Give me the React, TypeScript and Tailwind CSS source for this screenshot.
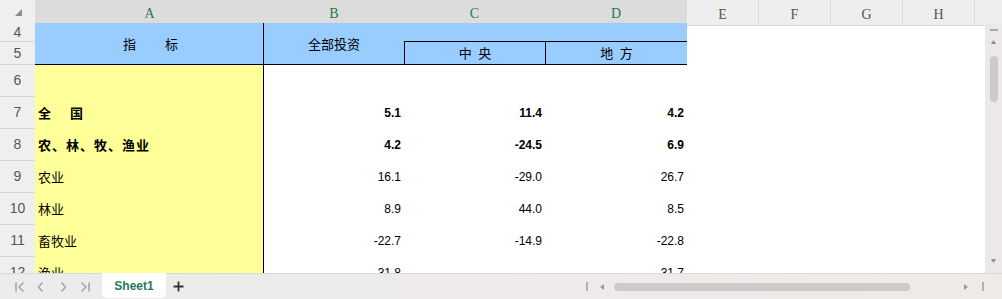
import React from "react";

const cjk = { fontFamily: '"Noto Sans CJK SC", "Noto Sans", sans-serif' };
const num = { fontFamily: '"Liberation Sans", Arial, sans-serif' };

type Row = { n: number; a: string; b: string; c: string; d: string; bold?: boolean };

const rows: Row[] = [
  { n: 6, a: "", b: "", c: "", d: "" },
  { n: 7, a: "全\u3000 国", b: "5.1", c: "11.4", d: "4.2", bold: true },
  { n: 8, a: "农、林、牧、渔业", b: "4.2", c: "-24.5", d: "6.9", bold: true },
  { n: 9, a: "农业", b: "16.1", c: "-29.0", d: "26.7" },
  { n: 10, a: "林业", b: "8.9", c: "44.0", d: "8.5" },
  { n: 11, a: "畜牧业", b: "-22.7", c: "-14.9", d: "-22.8" },
  { n: 12, a: "渔业", b: "31.8", c: "", d: "31.7" },
];

const rowStart = [
  "row-start-3",
  "row-start-4",
  "row-start-5",
  "row-start-6",
  "row-start-7",
  "row-start-8",
  "row-start-9",
];

function RowHdr({ label, cls }: { label: string; cls: string }) {
  return (
    <div
      className={`col-start-1 ${cls} flex items-center justify-center bg-[#efefef] border-b border-[#d6d6d6] text-[14px] text-[#555]`}
      style={num}
    >
      {label}
    </div>
  );
}

function Arrow({ d, w = 10, h = 10 }: { d: string; w?: number; h?: number }) {
  return (
    <svg width={w} height={h} viewBox={`0 0 ${w} ${h}`} fill="none" stroke="#a6a6a6" strokeWidth="1.6" strokeLinecap="round" strokeLinejoin="round">
      <path d={d} />
    </svg>
  );
}

export default function App() {
  const colHdr = "flex items-center justify-center pt-[3px] text-[14px]";
  return (
    <div className="w-[1002px] h-[299px] flex flex-col overflow-hidden bg-white select-none">
      {/* column header row */}
      <div
        className="grid h-[23px] shrink-0 grid-cols-[35px_229px_140px_141px_142px_72px_72px_72px_72px_1fr]"
        style={{ fontFamily: '"Liberation Serif", serif' }}
      >
        <div className="bg-[#efefef] flex items-start justify-start pl-[15px] pt-[9px]">
          <svg width="7" height="7" viewBox="0 0 7 7">
            <polygon points="7,0 7,7 0,7" fill="#8c8c8c" />
          </svg>
        </div>
        {["A", "B", "C", "D"].map((l) => (
          <div key={l} className={`${colHdr} bg-[#dcdcdc] border-b-2 border-[#3f9132] text-[#1f7a4d]`}>
            {l}
          </div>
        ))}
        {["E", "F", "G", "H"].map((l) => (
          <div key={l} className={`${colHdr} bg-[#eeeeee] border-r border-b border-[#d9d9d9] text-[#555]`}>
            {l}
          </div>
        ))}
        <div className="bg-[#eeeeee] border-b border-[#d9d9d9]" />
      </div>

      {/* body */}
      <div className="flex h-[250px] shrink-0 overflow-hidden">
        <div className="w-[985px] h-[250px] overflow-hidden">
          <div className="grid grid-cols-[35px_229px_140px_141px_142px_72px_72px_72px_72px_1fr] grid-rows-[19px_23px_repeat(7,32px)] text-black">
            <RowHdr label="4" cls="row-start-1" />
            <RowHdr label="5" cls="row-start-2" />
            <div
              className="col-start-2 row-start-1 row-span-2 bg-[#99ccff] border-r border-b border-black flex items-center justify-center pl-[3px] text-[13px] whitespace-pre"
              style={cjk}
            >
              {"指\u3000 \u3000标"}
            </div>
            <div
              className="col-start-3 row-start-1 row-span-2 bg-[#99ccff] border-b border-black flex items-center justify-center text-[13px]"
              style={cjk}
            >
              全部投资
            </div>
            <div className="col-start-4 row-start-1 bg-[#99ccff] border-b border-black" />
            <div className="col-start-5 row-start-1 bg-[#99ccff] border-b border-black" />
            <div
              className="col-start-4 row-start-2 bg-[#99ccff] border-l border-b border-black flex items-center justify-center text-[13px] whitespace-pre"
              style={cjk}
            >
              {"中\u2002央"}
            </div>
            <div
              className="col-start-5 row-start-2 bg-[#99ccff] border-l border-b border-black flex items-center justify-center text-[13px] whitespace-pre"
              style={cjk}
            >
              {"地\u2002方"}
            </div>

            {rows.map((r, i) => (
              <React.Fragment key={r.n}>
                <RowHdr label={String(r.n)} cls={rowStart[i]} />
                <div
                  className={`col-start-2 ${rowStart[i]} bg-[#ffff99] border-r border-black flex items-center pl-[3px] text-[13px] whitespace-pre ${r.bold ? "font-bold tracking-[1px]" : ""}`}
                  style={cjk}
                >
                  {r.a}
                </div>
                {[r.b, r.c, r.d].map((v, j) => (
                  <div
                    key={j}
                    className={`${j === 0 ? "col-start-3" : j === 1 ? "col-start-4" : "col-start-5"} ${rowStart[i]} flex items-center justify-end pr-[3px] text-[12px] ${r.bold ? "font-bold" : ""}`}
                    style={num}
                  >
                    {v}
                  </div>
                ))}
              </React.Fragment>
            ))}
          </div>
        </div>

        {/* vertical scrollbar */}
        <div className="w-[17px] h-[250px] bg-[#ebe8e7] flex flex-col items-center">
          <div className="mt-[6px] w-[8px] h-[2px] bg-[#a9a9a9]" />
          <div className="mt-[9px]">
            <svg width="5" height="4" viewBox="0 0 5 4">
              <polygon points="2.5,0 5,4 0,4" fill="#8f8f8f" />
            </svg>
          </div>
          <div className="mt-[12px] w-[8px] h-[46px] rounded-full bg-[#cdcbca]" />
          <div className="flex-1" />
          <div className="mb-[10px]">
            <svg width="5" height="4" viewBox="0 0 5 4">
              <polygon points="0,0 5,0 2.5,4" fill="#8f8f8f" />
            </svg>
          </div>
        </div>
      </div>

      {/* bottom bar */}
      <div className="relative flex-1 flex items-center border-t border-[#d9d9d9] bg-gradient-to-r from-[#eaecee] via-[#eeeae9] to-[#efe9e7]">
        <div className="flex items-center pl-[15px]">
          <Arrow d="M1 1 V9 M8 1 L4 5 L8 9" />
          <div className="ml-[12px]">
            <Arrow d="M5 1 L1.5 5 L5 9" w={7} />
          </div>
          <div className="ml-[16px]">
            <Arrow d="M2 1 L5.5 5 L2 9" w={7} />
          </div>
          <div className="ml-[13px]">
            <Arrow d="M2 1 L6 5 L2 9 M9 1 V9" />
          </div>
        </div>
        <div
          className="ml-[12px] -mt-[1px] self-start w-[64px] h-[25px] bg-white rounded-b-[5px] flex items-center justify-center text-[12px] font-bold text-[#1f7a5a]"
          style={num}
        >
          Sheet1
        </div>
        <div className="ml-[7px]">
          <svg width="11" height="11" viewBox="0 0 11 11" stroke="#333" strokeWidth="1.8">
            <path d="M5.5 0.5 V10.5 M0.5 5.5 H10.5" />
          </svg>
        </div>

        <div className="ml-[402px] w-[2px] h-[9px] bg-[#b0b0b0]" />
        <div className="ml-[12px]">
          <svg width="4" height="6" viewBox="0 0 4 6">
            <polygon points="4,0 4,6 0,3" fill="#9a9a9a" />
          </svg>
        </div>
        <div className="ml-[10px] w-[296px] h-[8px] rounded-full bg-[#cdcbca]" />
        <div className="ml-[54px]">
          <svg width="4" height="6" viewBox="0 0 4 6">
            <polygon points="0,0 4,3 0,6" fill="#9a9a9a" />
          </svg>
        </div>
        <div className="ml-[14px] w-[2px] h-[9px] bg-[#b0b0b0]" />
      </div>
    </div>
  );
}
